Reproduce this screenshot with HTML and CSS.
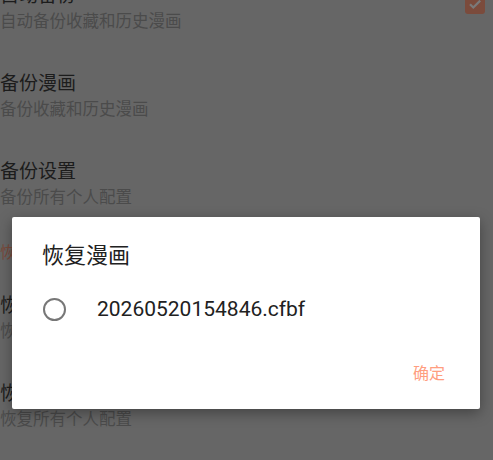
FILE: index.html
```html
<!DOCTYPE html>
<html>
<head>
<meta charset="utf-8">
<title>恢复漫画</title>
<link rel="stylesheet" href="styles.css">
</head>
<body>
<div class="screen">
  <ul class="prefs">
    <li class="pref">
      <div class="pref-text">
        <div class="pref-title">自动备份</div>
        <div class="pref-summary">自动备份收藏和历史漫画</div>
      </div>
      <span class="checkbox">
        <svg viewBox="0 0 20 20" width="20" height="20"><path d="M5 10.2l3.3 3.3L15.2 6.6" fill="none" stroke="#7a7a7a" stroke-width="2.2"/></svg>
      </span>
    </li>
    <li class="pref">
      <div class="pref-text">
        <div class="pref-title">备份漫画</div>
        <div class="pref-summary">备份收藏和历史漫画</div>
      </div>
    </li>
    <li class="pref">
      <div class="pref-text">
        <div class="pref-title">备份设置</div>
        <div class="pref-summary">备份所有个人配置</div>
      </div>
    </li>
    <li class="pref-category">恢复</li>
    <li class="pref">
      <div class="pref-text">
        <div class="pref-title">恢复漫画</div>
        <div class="pref-summary">恢复收藏和历史漫画</div>
      </div>
    </li>
    <li class="pref">
      <div class="pref-text">
        <div class="pref-title">恢复设置</div>
        <div class="pref-summary">恢复所有个人配置</div>
      </div>
    </li>
  </ul>

  <div class="dialog">
    <div class="dialog-title">恢复漫画</div>
    <ul class="choices">
      <li class="choice"><span class="radio"></span><span class="choice-label">20260520154846.cfbf</span></li>
    </ul>
    <div class="dialog-actions">
      <a href="#" class="btn">确定</a>
    </div>
  </div>
</div>
</body>
</html>
```

FILE: styles.css
```css
html,body,ul,li{margin:0;padding:0;}
li{list-style:none;}
a{text-decoration:none;}
body{background:#666;font-family:Roboto,"Noto Sans CJK SC",sans-serif;width:493px;height:460px;overflow:hidden;}
.screen{position:relative;width:493px;height:460px;overflow:hidden;}

.prefs{margin-top:-39px;padding-right:8px;}
.pref{display:flex;align-items:center;height:88px;box-sizing:border-box;padding:21px 0 16px;}
.pref-text{flex:1;}
.pref-title{font-size:19px;line-height:28px;color:#1c1c1c;}
.pref-summary{font-size:16.5px;line-height:23px;color:#4b4b4b;}
.pref-category{font-size:16px;line-height:22px;color:#7a4a3b;padding:17px 0 7px;}
.checkbox{width:20px;height:20px;border-radius:3px;background:#7b4b3c;display:block;align-self:flex-start;margin-top:12px;}
.checkbox svg{display:block;}

.dialog{position:absolute;left:12px;top:217px;width:468px;background:#fff;border-radius:2px;box-shadow:0 4px 14px rgba(0,0,0,.35);padding:24px 0 17px;}
.dialog-title{font-size:22px;line-height:30px;color:#212121;padding:0 30px;}
.choices{margin-top:14px;}
.choice{display:flex;align-items:center;height:48px;padding-left:31px;}
.radio{width:19px;height:19px;border:2.3px solid #777;border-radius:50%;flex:none;}
.choice-label{font-size:21px;color:#212121;margin-left:31px;}
.dialog-actions{display:flex;justify-content:flex-end;margin-top:23px;padding-right:35px;}
.btn{font-size:16px;line-height:36px;color:#ff9e80;}
```
